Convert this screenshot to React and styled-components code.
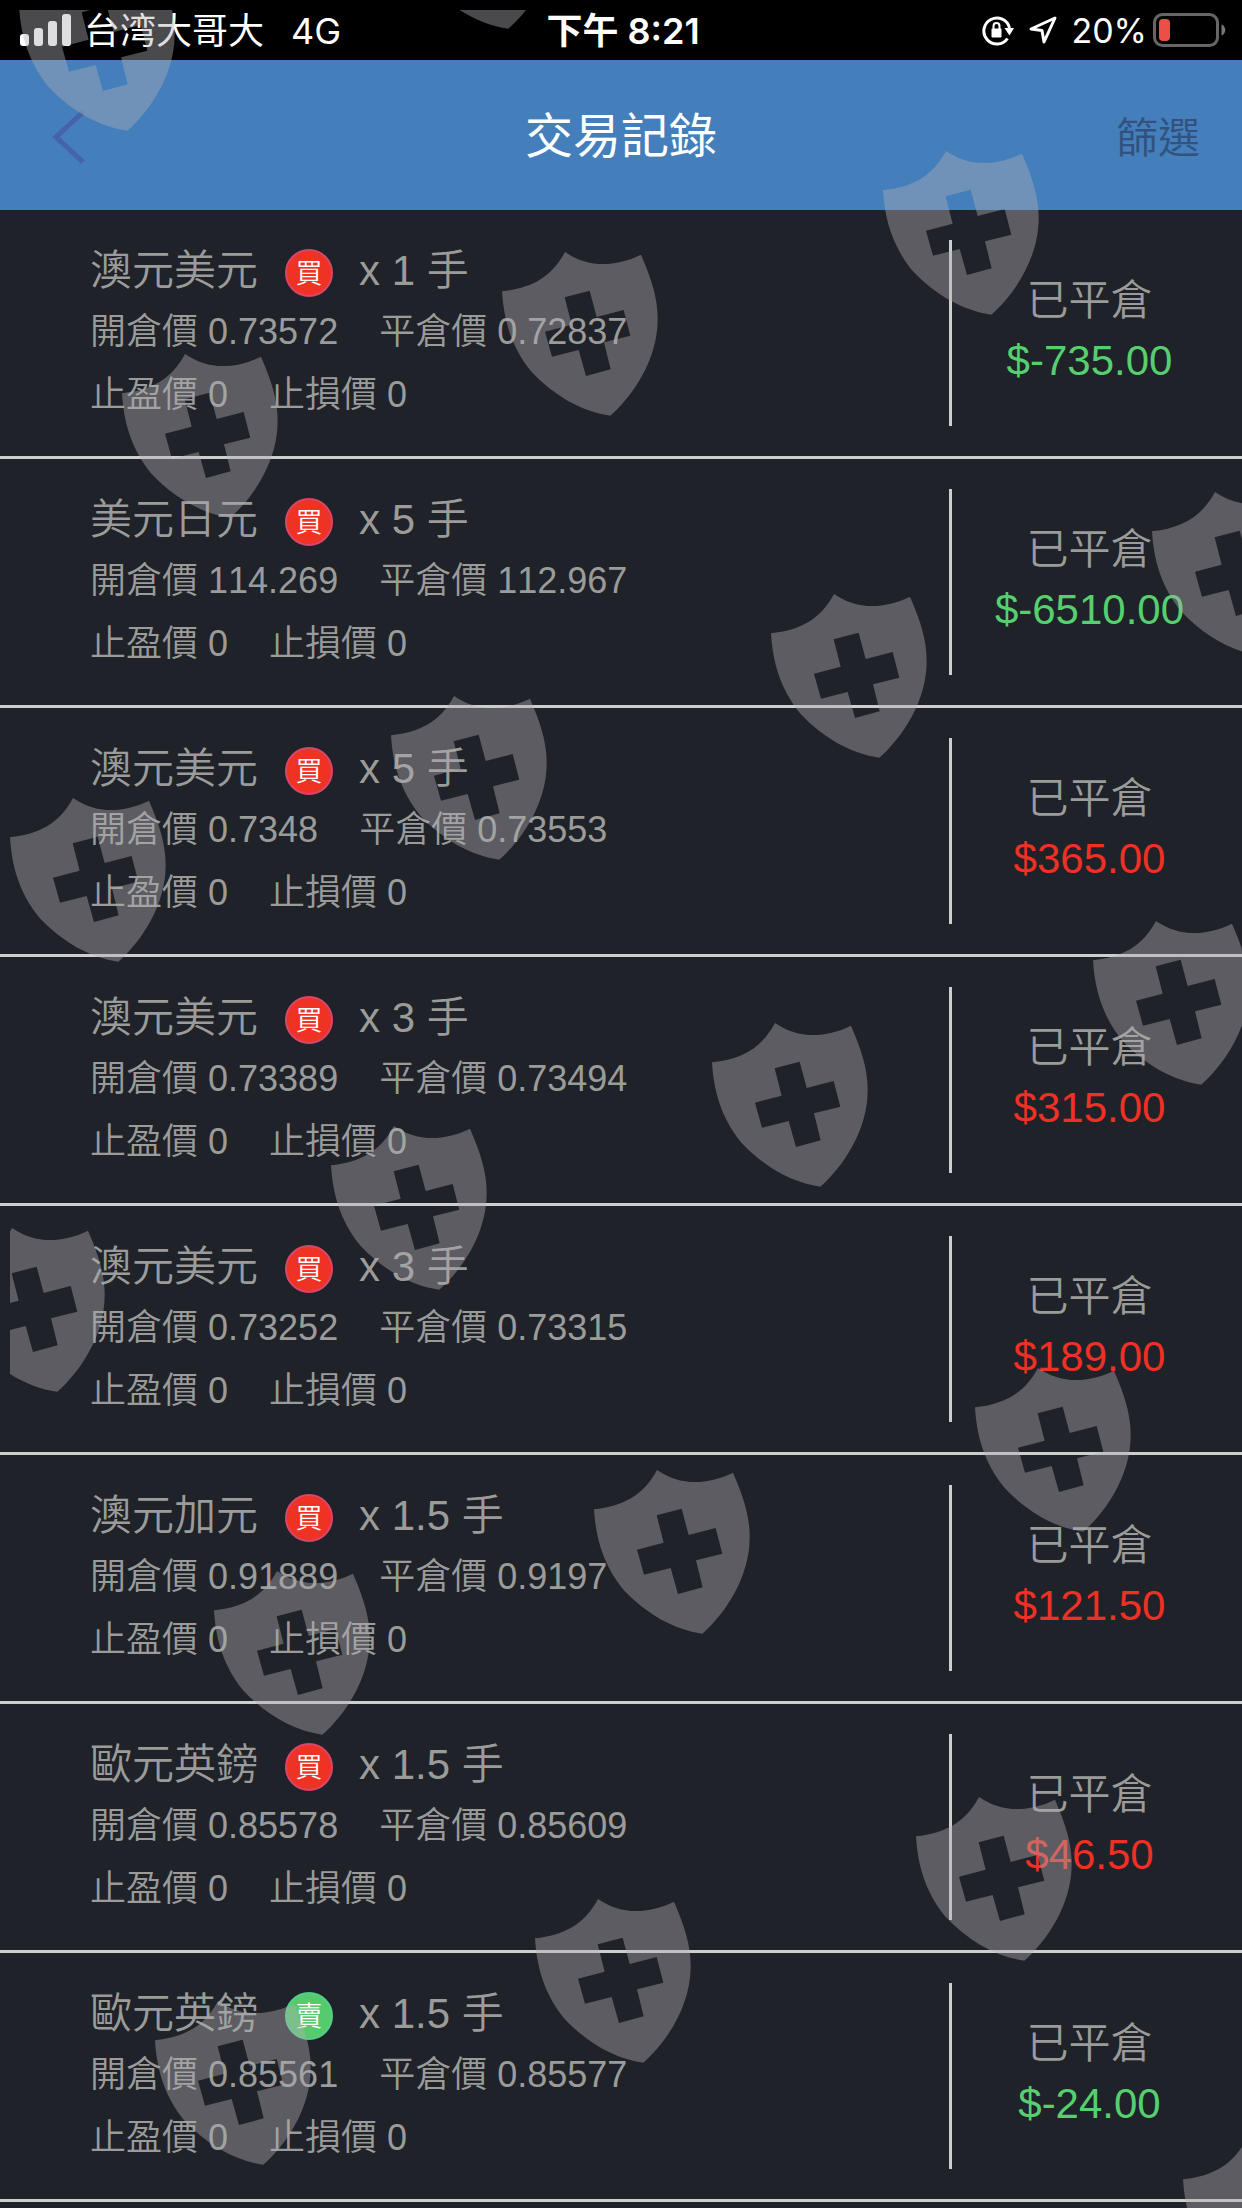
import React from "react";
import styled, { createGlobalStyle } from "styled-components";

const GlobalStyle = createGlobalStyle`
  *, *::before, *::after { box-sizing: border-box; }
  body {
    margin: 0;
    background: #1f2229;
    font-family: "Liberation Sans", "Noto Sans CJK TC", sans-serif;
    font-kerning: none;
  }
`;

const Page = styled.div`
  position: relative;
  min-height: 100vh;
  overflow: hidden;
  color: #9b9c9a;
`;

const StatusBar = styled.div`
  display: grid;
  grid-template-columns: 1fr auto 1fr;
  align-items: center;
  height: 60px;
  padding: 0 16px 0 20px;
  background: #000;
  color: #fff;
  font-family: Inter, "Noto Sans CJK TC", sans-serif;
  font-size: 36px;
  line-height: 58px;
  white-space: nowrap;
`;

const StatusGroup = styled.div`
  display: flex;
  align-items: center;
  justify-content: ${(p) => (p.$end ? "flex-end" : "flex-start")};
  gap: ${(p) => p.$gap}px;
`;

const StatusText = styled.span`
  padding-top: 2px;
  font-size: ${(p) => (p.$small ? 34 : 36)}px;
  font-weight: ${(p) => (p.$strong ? 600 : 400)};
`;

const Icon = styled.svg`
  display: block;
  flex: none;
`;

const Header = styled.header`
  display: grid;
  grid-template-columns: 1fr auto 1fr;
  align-items: center;
  height: 150px;
  padding: 4px 42px 0;
  background: #447fbc;
`;

const Title = styled.h1`
  margin: 0;
  color: #fff;
  font-size: 48px;
  font-weight: 400;
  line-height: 60px;
`;

const HeaderButton = styled.button`
  justify-self: ${(p) => (p.$end ? "end" : "start")};
  padding: ${(p) => (p.$end ? "4px 0 0" : "0 10px")};
  border: 0;
  background: none;
  color: #31517f;
  font: inherit;
  font-size: 42px;
  font-weight: 350;
  line-height: 60px;
  cursor: pointer;
`;

const List = styled.ul`
  margin: 0;
  padding: 0;
  list-style: none;
`;

const Row = styled.li`
  display: grid;
  grid-template-columns: 1fr 293px;
  padding: 30px 0;
  border-bottom: 3px solid #cdcfcd;
`;

const Details = styled.div`
  padding: 2px 0 0 90px;
  white-space: nowrap;
`;

const Headline = styled.div`
  display: flex;
  align-items: center;
  height: 58px;
  font-size: 42px;
  font-weight: 350;
  line-height: 58px;
`;

const Badge = styled.span`
  display: flex;
  align-items: center;
  justify-content: center;
  width: 48px;
  height: 48px;
  margin: 4px 26px 0 27px;
  border: 2px solid ${(p) => (p.$sell ? "#4fcf8a" : "#d9456b")};
  border-radius: 50%;
  background: ${(p) => (p.$sell ? "#55cb6d" : "#ee3224")};
  color: #fff;
  font-size: 27px;
  font-weight: 350;
  line-height: 44px;
  padding-top: 2px;
`;

const Prices = styled.div`
  display: flex;
  gap: 41px;
  font-size: 36px;
  font-weight: 350;
  line-height: 63px;
`;

const Result = styled.div`
  display: flex;
  flex-direction: column;
  align-items: center;
  justify-content: center;
  padding: 0 15px 4px 0;
  border-left: 3px solid #cdcfcd;
  font-size: 42px;
  font-weight: 350;
  line-height: 60px;
`;

const Amount = styled.span`
  color: ${(p) => (p.$loss ? "#56d06f" : "#f03024")};
`;

const Watermark = styled.svg`
  position: absolute;
  top: 10px;
  left: 10px;
  width: calc(100% - 10px);
  height: calc(100% - 10px);
  pointer-events: none;
`;

const trades = [
  { pair: "澳元美元", lots: "1", open: "0.73572", close: "0.72837", profit: "-735.00" },
  { pair: "美元日元", lots: "5", open: "114.269", close: "112.967", profit: "-6510.00" },
  { pair: "澳元美元", lots: "5", open: "0.7348", close: "0.73553", profit: "365.00" },
  { pair: "澳元美元", lots: "3", open: "0.73389", close: "0.73494", profit: "315.00" },
  { pair: "澳元美元", lots: "3", open: "0.73252", close: "0.73315", profit: "189.00" },
  { pair: "澳元加元", lots: "1.5", open: "0.91889", close: "0.9197", profit: "121.50" },
  { pair: "歐元英鎊", lots: "1.5", open: "0.85578", close: "0.85609", profit: "46.50" },
  { pair: "歐元英鎊", lots: "1.5", open: "0.85561", close: "0.85577", profit: "-24.00", sell: true },
];

const shields = [
  [400, -135], [19, -33],
  [883, 151], [502, 252], [122, 354],
  [1152, 492], [771, 594], [391, 696], [10, 798],
  [1093, 921], [712, 1023], [331, 1126], [-51, 1228],
  [975, 1368], [594, 1470], [214, 1571],
  [916, 1797], [535, 1899], [155, 2001],
  [1183, 2140],
];

function ShieldPattern() {
  return (
    <Watermark aria-hidden="true">
      <defs>
        <path
          id="shield"
          transform="scale(0.3333) translate(-33 -42)"
          fillRule="evenodd"
          d="M33 160C120 150 180 120 222 42C290 88 365 90 450 50C483 125 501 185 500 245C500 360 430 470 358 533C275 522 190 475 120 400C60 325 38 245 33 160ZM221 178L296 158L317 237L398 216L418 293L339 313L359 394L285 414L263 336L183 356L162 281L242 260Z"
        />
      </defs>
      <g fill="#b1afb2" fillOpacity="0.42">
        {shields.map(([x, y]) => (
          <use key={`${x},${y}`} href="#shield" x={x - 10} y={y - 10} />
        ))}
      </g>
    </Watermark>
  );
}

function SignalIcon() {
  return (
    <Icon width="51" height="32" viewBox="0 0 51 32" fill="#fff">
      <rect x="0" y="20" width="9" height="12" rx="3" />
      <rect x="14" y="14" width="9" height="18" rx="3" />
      <rect x="28" y="7" width="9" height="25" rx="3" />
      <rect x="42" y="0" width="9" height="32" rx="3" />
    </Icon>
  );
}

function RotationLockIcon() {
  return (
    <Icon width="33" height="32" viewBox="0 0 33 32" fill="none" stroke="#fff">
      <path d="M25.500 24.500A13 13 0 1 1 27.500 14" strokeWidth="3" />
      <path d="M22.500 14H32L27.500 21.500Z" fill="#fff" stroke="none" />
      <rect x="9.500" y="14.500" width="10" height="9" rx="1" fill="#fff" stroke="none" />
      <path d="M11.500 15V12a3 3 0 0 1 6 0V15" strokeWidth="2" />
    </Icon>
  );
}

function LocationIcon() {
  return (
    <Icon width="28" height="28" viewBox="0 0 28 28" fill="none" stroke="#fff" strokeWidth="3" strokeLinejoin="round">
      <path d="M26 2L2 13L13 14.500L15 26Z" />
    </Icon>
  );
}

function BatteryIcon() {
  return (
    <Icon width="73" height="34" viewBox="0 0 73 34">
      <rect x="1.500" y="1.500" width="63" height="31" rx="8" fill="none" stroke="#666" strokeWidth="3" />
      <rect x="6" y="6" width="11" height="22" rx="4" fill="#ec5044" />
      <path d="M68.500 11.500C73.500 13 73.500 21 68.500 22.500Z" fill="#777" />
    </Icon>
  );
}

function Trade({ pair, lots, open, close, profit, sell }) {
  return (
    <Row>
      <Details>
        <Headline>
          <span>{pair}</span>
          <Badge $sell={sell}>{sell ? "賣" : "買"}</Badge>
          <span>x {lots} 手</span>
        </Headline>
        <Prices>
          <span>開倉價 {open}</span>
          <span>平倉價 {close}</span>
        </Prices>
        <Prices>
          <span>止盈價 0</span>
          <span>止損價 0</span>
        </Prices>
      </Details>
      <Result>
        <span>已平倉</span>
        <Amount $loss={profit.startsWith("-")}>${profit}</Amount>
      </Result>
    </Row>
  );
}

export default function App() {
  return (
    <>
      <GlobalStyle />
      <Page>
        <StatusBar>
          <StatusGroup $gap={13}>
            <SignalIcon />
            <StatusGroup $gap={27}>
              <StatusText>台湾大哥大</StatusText>
              <StatusText>4G</StatusText>
            </StatusGroup>
          </StatusGroup>
          <StatusText as="time" $strong>下午 8:21</StatusText>
          <StatusGroup $end $gap={14}>
            <RotationLockIcon />
            <LocationIcon />
            <StatusGroup $gap={6}>
              <StatusText $small>20%</StatusText>
              <BatteryIcon />
            </StatusGroup>
          </StatusGroup>
        </StatusBar>
        <Header>
          <HeaderButton aria-label="返回">
            <Icon width="34" height="56" viewBox="0 0 34 56" fill="none" stroke="#4562ab" strokeWidth="5">
              <path d="M31 3L4 28L31 53" />
            </Icon>
          </HeaderButton>
          <Title>交易記錄</Title>
          <HeaderButton $end>篩選</HeaderButton>
        </Header>
        <List>
          {trades.map((trade, i) => (
            <Trade key={i} {...trade} />
          ))}
        </List>
        <ShieldPattern />
      </Page>
    </>
  );
}
